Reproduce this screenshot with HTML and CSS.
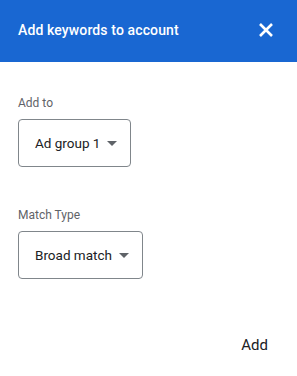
FILE: index.html
```html
<!DOCTYPE html>
<html>
<head>
	<meta charset="utf-8"/>
	<title>Add keywords</title>
	<link rel="stylesheet" href="styles.css">
</head>
<body>
<div class="dialog">
	<div class="dlg-head">
		<span class="dlg-title">Add keywords to account</span>
		<svg class="dlg-close" width="16" height="16" viewBox="0 0 16 16">
			<path d="M2 2 L14 14 M14 2 L2 14" stroke="#fff" stroke-width="2.6" fill="none"/>
		</svg>
	</div>
	<div class="dlg-body">
		<div class="field">
			<div class="field-label">Add to</div>
			<div class="dd">Ad group 1<span class="dd-arrow"></span></div>
		</div>
		<div class="field">
			<div class="field-label">Match Type</div>
			<div class="dd">Broad match<span class="dd-arrow"></span></div>
		</div>
	</div>
	<div class="dlg-foot">
		<span class="btn-add">Add</span>
	</div>
</div>
</body>
</html>
```

FILE: styles.css
```css
body{
	margin: 0;
	background: #fff;
}
*{
	font-family: Roboto, "Liberation Sans", sans-serif;
	box-sizing: border-box;
}

.dialog{
	width: 297px;
	height: 376px;
	display: flex;
	flex-direction: column;
}
.dlg-head{
	height: 62px;
	background: #1967d2;
	display: flex;
	align-items: center;
	justify-content: space-between;
	padding: 0 23px 0 18px;
}
.dlg-title{
	color: #fff;
	font-size: 14px;
	font-weight: 500;
	letter-spacing: 0.12px;
	margin-top: -2px;
}
.dlg-close{
	display: block;
	margin-top: -2px;
}

.dlg-body{
	padding: 33px 18px 0 18px;
	display: flex;
	flex-direction: column;
	gap: 40px;
}
.field-label{
	color: #5f6368;
	font-size: 12px;
	line-height: 16px;
	margin-bottom: 8px;
}
.dd{
	display: inline-flex;
	align-items: center;
	height: 48px;
	padding: 0 13px 0 16px;
	border: 1px solid #80868b;
	border-radius: 4px;
	color: #202124;
	font-size: 13.5px;
}
.dd-arrow{
	width: 0;
	height: 0;
	border-left: 5px solid transparent;
	border-right: 5px solid transparent;
	border-top: 5px solid #5f6368;
	margin-left: 7px;
}

.dlg-foot{
	flex: 1;
	display: flex;
	justify-content: flex-end;
	align-items: flex-end;
	padding: 0 29px 22px 0;
}
.btn-add{
	font-size: 15px;
	color: #202124;
}
```
